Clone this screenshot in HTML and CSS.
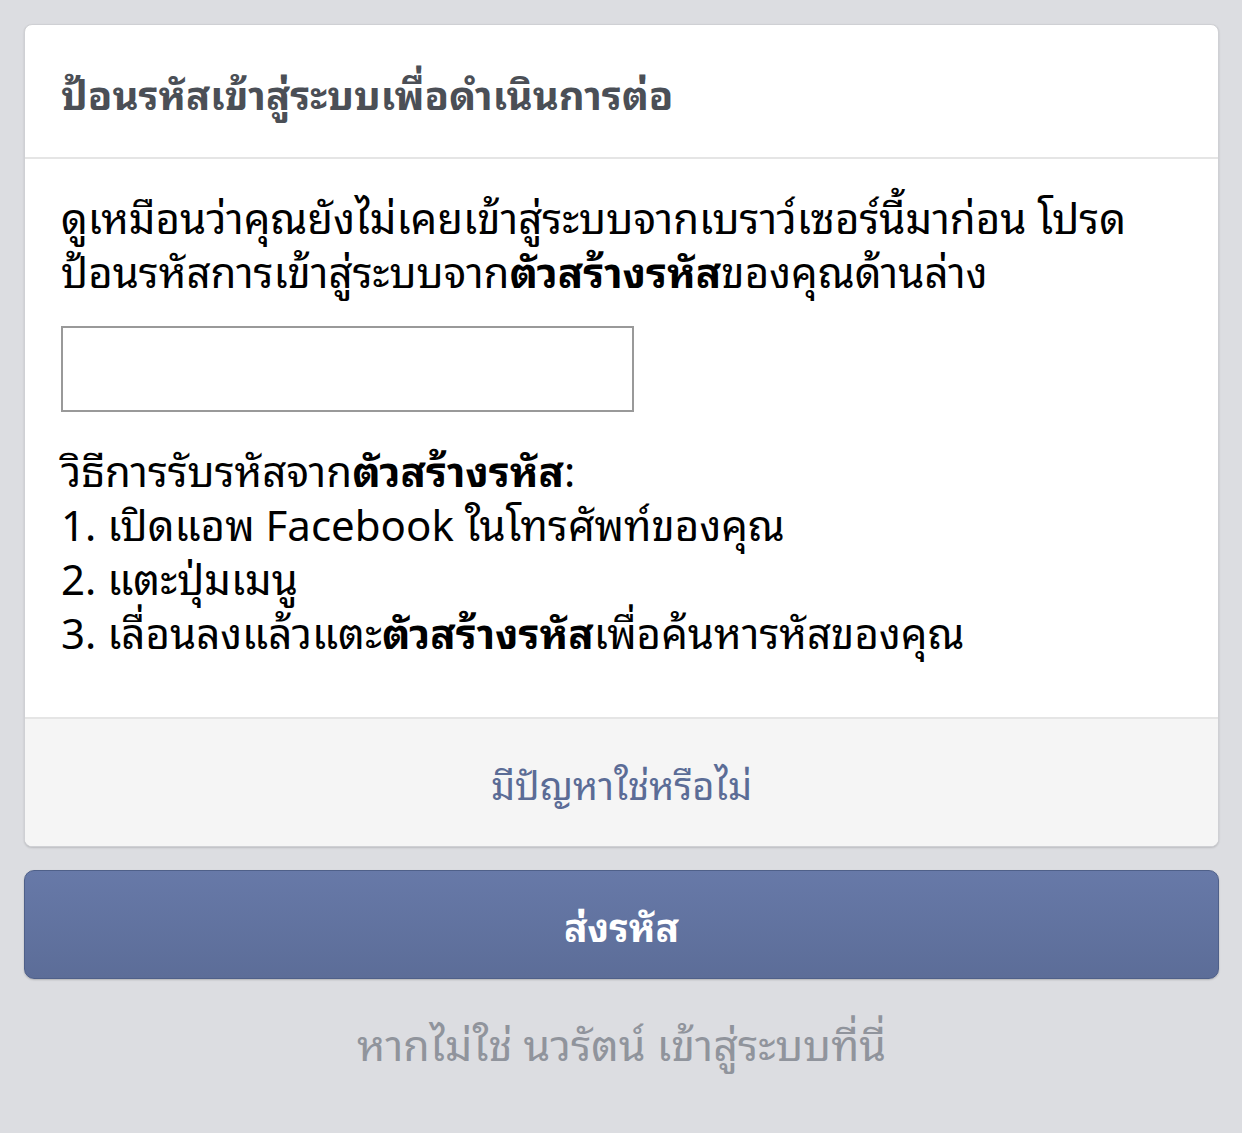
FILE: index.html
```html
<!DOCTYPE html>
<html>
<head>
  <meta charset="utf-8">
  <title>ป้อนรหัสเข้าสู่ระบบ</title>
  <link rel="stylesheet" href="styles.css">
</head>
<body>
  <!-- Login code card -->
  <div class="page">
    <div class="card">
      <div class="card-header">ป้อนรหัสเข้าสู่ระบบเพื่อดำเนินการต่อ</div>
      <div class="card-body">
        <p class="intro">ดูเหมือนว่าคุณยังไม่เคยเข้าสู่ระบบจากเบราว์เซอร์นี้มาก่อน โปรด<br>ป้อนรหัสการเข้าสู่ระบบจาก<b>ตัวสร้างรหัส</b>ของคุณด้านล่าง</p>
        <input type="text" class="code-input">
        <p class="steps">
          วิธีการรับรหัสจาก<b>ตัวสร้างรหัส</b>:<br>
          1. เปิดแอพ Facebook ในโทรศัพท์ของคุณ<br>
          2. แตะปุ่มเมนู<br>
          3. เลื่อนลงแล้วแตะ<b>ตัวสร้างรหัส</b>เพื่อค้นหารหัสของคุณ
        </p>
      </div>
      <div class="card-footer">
        <a href="#" class="help-link">มีปัญหาใช่หรือไม่</a>
      </div>
    </div>
    <button class="submit-btn">ส่งรหัส</button>
    <a href="#" class="not-you">หากไม่ใช่ นวรัตน์ เข้าสู่ระบบที่นี่</a>
  </div>
  <div class="bottom-strip"></div>
</body>
</html>
```

FILE: styles.css
```css
body {
  margin: 0;
  background-color: #dcdde1;
  font-family: "Noto Sans Thai Looped", "Noto Serif Thai", "Loma", "Garuda", "Noto Sans Thai", "Noto Sans", "Liberation Sans", sans-serif;
}

.page {
  padding: 24px 23px 0 24px;
  height: 1133px;
  box-sizing: border-box;
}

.card {
  background-color: #ffffff;
  border: 1px solid #cfd0d4;
  border-radius: 8px;
  overflow: hidden;
  box-shadow: 0 1px 2px rgba(0, 0, 0, 0.15);
}

.card-header {
  height: 134px;
  padding: 2px 36px 0;
  box-sizing: border-box;
  display: flex;
  align-items: center;
  font-size: 40px;
  font-weight: bold;
  color: #4b4f56;
  border-bottom: 2px solid #e5e5e5;
}

.card-body {
  padding: 29px 36px 60px;
  color: #000000;
  font-size: 42px;
  line-height: 54px;
}

.card-body p {
  margin: 0;
}

.code-input {
  display: block;
  width: 573px;
  height: 86px;
  margin: 30px 0 29px;
  border: 2px solid #999999;
  box-sizing: border-box;
  background-color: #ffffff;
}

.card-footer {
  height: 127px;
  display: flex;
  align-items: center;
  justify-content: center;
  background-color: #f5f5f5;
  border-top: 2px solid #e5e5e5;
}

.help-link {
  color: #5b6c96;
  font-size: 38px;
  text-decoration: none;
}

.submit-btn {
  display: block;
  width: 100%;
  height: 109px;
  margin-top: 23px;
  border: 1px solid #4f6089;
  border-radius: 10px;
  background: linear-gradient(#6779a8, #5c6d98);
  color: #ffffff;
  font-family: inherit;
  font-size: 39px;
  font-weight: bold;
  box-shadow: 0 1px 2px rgba(0, 0, 0, 0.2);
}

.not-you {
  display: block;
  margin-top: 36px;
  text-align: center;
  color: #90949c;
  font-size: 43px;
  line-height: 54px;
  text-decoration: none;
}

.bottom-strip {
  height: 10px;
  background-color: #ffffff;
}
```
